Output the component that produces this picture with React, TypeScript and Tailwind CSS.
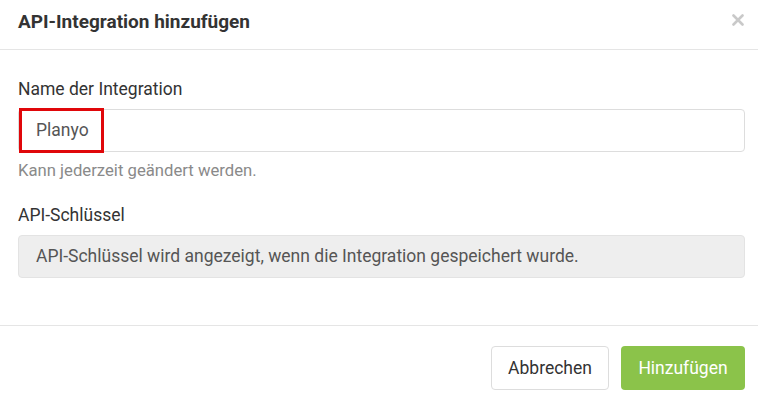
import React from 'react';

const App: React.FC = () => {
  return (
    <div className="w-[758px] h-[402px] bg-white text-[#333] font-['Roboto','Liberation_Sans',sans-serif] flex flex-col">
      {/* Header */}
      <div className="h-[50px] pl-[18px] pr-[14px] pb-[5px] flex items-center justify-between border-b border-[#e5e5e5]">
        <h1 className="text-[19px] font-bold text-[#333]">API-Integration hinzufügen</h1>
        <svg width="12" height="12" viewBox="0 0 12 12" className="mb-[4px]">
          <path d="M1.5 1.5 L10.5 10.5 M10.5 1.5 L1.5 10.5" stroke="#c9c9c9" strokeWidth="2.6" strokeLinecap="round" />
        </svg>
      </div>

      {/* Body */}
      <div className="pl-[18px] pr-[13px] pt-[28px] h-[276px] border-b border-[#e5e5e5]">
        <label className="block text-[17.5px] leading-[22px] text-[#333] mb-[9px]">Name der Integration</label>
        <div className="relative">
          <div className="h-[43px] border border-[#ddd] rounded-[4px] flex items-center pl-[17px] text-[17.5px] text-[#555]">
            Planyo
          </div>
          <div className="absolute left-[1px] top-[-1px] w-[85px] h-[45px] border-[3px] border-[#e0070a]" />
        </div>
        <p className="text-[16.7px] leading-[20px] text-[#8a8a8a] mt-[9px]">Kann jederzeit geändert werden.</p>

        <label className="block text-[17.5px] leading-[22px] text-[#333] mt-[23px] mb-[9px]">API-Schlüssel</label>
        <div className="h-[43px] bg-[#eee] border border-[#e3e3e3] rounded-[4px] flex items-center pl-[17px] text-[17.5px] text-[#555]">
          API-Schlüssel wird angezeigt, wenn die Integration gespeichert wurde.
        </div>
      </div>

      {/* Footer */}
      <div className="flex justify-end gap-[12px] pt-[20px] pr-[13px]">
        <button className="h-[44px] w-[118px] border border-[#ddd] rounded-[4px] bg-white text-[17.5px] text-[#333]">
          Abbrechen
        </button>
        <button className="h-[44px] w-[124px] rounded-[4px] bg-[#8bc34a] text-[17.5px] text-white">
          Hinzufügen
        </button>
      </div>
    </div>
  );
};

export default App;
